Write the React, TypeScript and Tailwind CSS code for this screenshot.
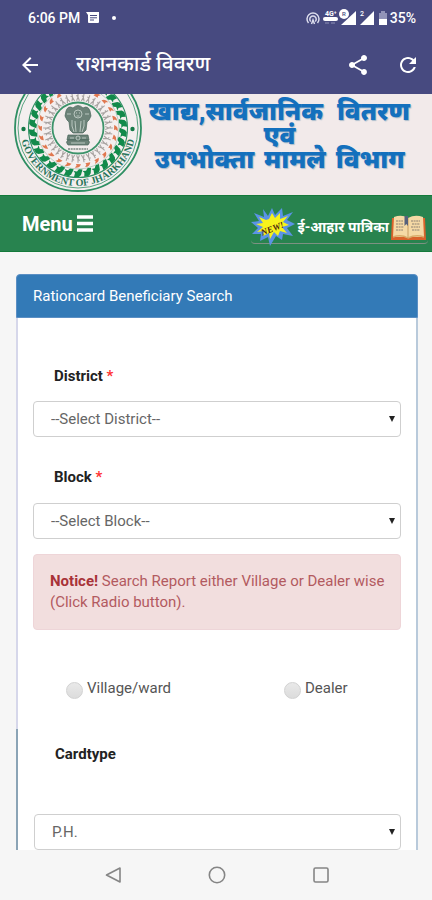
import React from "react";

const ring = (count: number) => Array.from({ length: count }, (_, i) => (i * 360) / count);

function Seal() {
  return (
    <svg viewBox="-65 -34 130 101" className="h-[101px] w-[130px] shrink-0" role="img" aria-label="Government of Jharkhand seal">
      <circle r="63" fill="#f4efef" stroke="#2f8f63" strokeWidth="1.8" />
      <circle r="60" fill="none" stroke="#5aa582" strokeWidth="1" />
      <circle r="49.5" fill="none" stroke="#2f8f63" strokeWidth="1.1" />
      {ring(30).map((a) => (
        <g key={a} transform={`rotate(${a}) translate(0 -45)`}>
          <path d="M-4.5 3.5 L-3 -2 L-1 -4 L4 -4 L3 0 L4.500 2 L1 1.500 L-1 4 Z" fill="#128a4b" />
        </g>
      ))}
      <circle r="41" fill="none" stroke="#a9c4b5" strokeWidth="0.8" />
      {ring(24).map((a) => (
        <g key={a} transform={`rotate(${a}) translate(0 -38)`}>
          <path d="M-3 1.8 Q-1.500 -2.400 3.200 -1.600 L1.400 0.300 L2 2 Z" fill="#e07850" />
        </g>
      ))}
      {ring(36).map((a) => (
        <g key={a} transform={`rotate(${a}) translate(0 -31)`} stroke="#a8a3a1" strokeWidth="1.100" fill="none">
          <path d="M0 -3.800 V0 L-1.400 3.800 M0 0 L1.400 3.800 M-1.800 -1.600 L0 -0.600" />
        </g>
      ))}
      <circle r="25.5" fill="#f3eded" stroke="#3c936a" strokeWidth="1.8" />
      <circle cx="-54.5" cy="1" r="2.2" fill="#157a47" />
      <circle cx="54.5" cy="1" r="2.2" fill="#157a47" />
      <g fill="#6c8278" stroke="#48665a" strokeWidth="0.7">
        <path d="M-5 -20 Q-10 -23 -12 -17 L-13 -12 L-11 -8 L-9 -6 L-8 2 L-5 5 L5 5 L8 2 L9 -6 L11 -8 L13 -12 L12 -17 Q10 -23 5 -20 Q0 -25 -5 -20 Z" />
        <path d="M-10 7 H10 L11 12 H-11 Z" />
        <path d="M-10 12 H10 Q13 14 10 17 H-10 Q-13 14 -10 12 Z" />
      </g>
      <g fill="none" stroke="#cdd8d2" strokeWidth="0.8">
        <circle cy="-14" r="4" />
        <path d="M-2 -15 H-1 M1 -15 H2 M-1.5 -12 H1.5 M-11 -14 H-7 M7 -14 H11 M-6 -8 Q-7 -2 -4 4 M6 -8 Q7 -2 4 4 M-3 -7 L-2 4 M3 -7 L2 4" />
        <circle cy="10" r="2" />
        <path d="M-8 10 H-4 M4 10 H8 M-7 15 H7" />
      </g>
      <path d="M-10 21 H10" stroke="#7d8883" strokeWidth="1.3" strokeDasharray="2 0.7" />
      <path id="seal-arc" d="M-57 8 A57.5 57.5 0 0 0 57 8" fill="none" />
      <text fontFamily="Liberation Serif, serif" fontWeight="700" fontSize="10" fill="#28755a">
        <textPath href="#seal-arc" startOffset="50%" textAnchor="middle">GOVERNMENT OF JHARKHAND</textPath>
      </text>
    </svg>
  );
}

function StatusIcons() {
  return (
    <svg viewBox="0 0 70 20" className="h-5 w-[70px]" fill="#fff" aria-hidden="true">
      <g fill="none" stroke="#dcdded" strokeWidth="1.500">
        <path d="M2.500 15 A6 6 0 1 1 11.500 15" />
        <path d="M4.800 13.500 A3.200 3.200 0 1 1 9.200 13.500" />
        <path d="M5.500 16 L7 12 L8.500 16" />
      </g>
      <text x="19" y="8" fontSize="7" fontWeight="700" fontFamily="Roboto, sans-serif">4G⁺</text>
      <rect x="17" y="9" width="15" height="4" rx="2" />
      <path d="M19 15 H23 M25 15 H29" stroke="#8f91b7" />
      <path d="M50 3 V17 H35 Z" />
      <circle cx="38" cy="6" r="5" />
      <text x="36" y="8" fontSize="6" fill="#474a80" fontFamily="Roboto, sans-serif">R</text>
      <path d="M68 3 V17 H54 Z" />
      <text x="54" y="8" fontSize="7" fontFamily="Roboto, sans-serif">2</text>
    </svg>
  );
}

function Battery() {
  return (
    <svg viewBox="0 0 10 16" className="h-4 w-2.5" aria-hidden="true">
      <path d="M3 1 H7 V3 H9 V15 H1 V3 H3 Z" fill="#9294b9" />
      <path d="M1 9 H9 V15 H1 Z" fill="#fff" />
    </svg>
  );
}

function NewBurst() {
  return (
    <svg viewBox="0 0 44 40" className="h-10 w-11" role="img" aria-label="New">
      <path fill="#5b93e6" d="M17 9 L21 1 L24 8 L31 1 L32 9 L42 5 L36 13 L44 17 L36 21 L42 29 L32 27 L31 33 L25 29 L19 39 L17 30 L9 34 L10 27 L1 27 L7 21 L0 15 L8 14 L3 6 L13 10 L12 2 Z" />
      <path fill="#f8f31c" d="M18 12 L21 6 L24 11 L29 6 L29 12 L37 9 L32 15 L38 18 L31 20 L36 26 L29 24 L27 29 L23 25 L19 32 L18 26 L12 29 L13 24 L6 25 L12 20 L5 17 L12 16 L8 10 L15 13 Z" />
      <text x="9" y="25" transform="rotate(-22 20 21)" fontFamily="Liberation Serif, serif" fontWeight="700" fontStyle="italic" fontSize="9" fill="#4b2412">NEW!</text>
    </svg>
  );
}

function Book() {
  return (
    <svg viewBox="0 0 35 27" className="h-[27px] w-[35px]" aria-hidden="true">
      <path d="M1 4 L34 4 L35 26 H0 Z" fill="#d9622b" />
      <path d="M3 3 Q11 0 17 4 Q24 0 32 3 L33 23 H2 Z" fill="#f5d9a5" />
      <path d="M2 23 Q10 20 17 24 Q25 20 33 23" fill="none" stroke="#d8ab6a" strokeWidth="1.4" />
      <path d="M17 4 V23" stroke="#c79d62" strokeWidth="1" />
      <path d="M13.500 2 H17 V12 L15.300 10 L13.500 12 Z" fill="#56617c" />
      <path d="M5 7 H12 M5 10 H12 M5 13 H13 M5 16 H12 M20 7 H29 M21 10 H29 M20 13 H29 M21 16 H29" stroke="#c0ac8b" strokeWidth="1.8" strokeDasharray="2 0.6" />
    </svg>
  );
}

type FieldSelectProps = { id: string; options: string[] };

function FieldSelect({ id, options }: FieldSelectProps) {
  return (
    <div className="relative">
      <select
        id={id}
        className="block h-9 w-full appearance-none rounded border border-[#cfcfcf] bg-white pl-[17px] pr-6 text-[15px] leading-5 text-[#666]"
      >
        {options.map((option) => (
          <option key={option}>{option}</option>
        ))}
      </select>
      <svg viewBox="0 0 6 6" className="pointer-events-none absolute right-1.5 top-[15px] size-1.5" aria-hidden="true">
        <path d="M0 0 H6 L3 6 Z" fill="#222" />
      </svg>
    </div>
  );
}

function RadioOption({ label, value }: { label: string; value: string }) {
  return (
    <label className="flex items-center gap-1">
      <input
        type="radio"
        name="wise"
        value={value}
        className="mt-1 size-[17px] appearance-none rounded-full border border-[#d2d2d2] bg-linear-to-b from-[#e9e9e9] to-[#dcdcdc] checked:border-[5px] checked:border-[#337ab7]"
      />
      <span>{label}</span>
    </label>
  );
}

export default function App() {
  return (
    <div className="flex h-screen flex-col bg-[#f6f6f6] font-[Roboto,'Noto_Sans',sans-serif] text-[15px] text-[#555]">
      <header className="shrink-0 bg-[#474a80] text-white">
        <div className="flex h-9 items-center justify-between pl-7 pr-4 text-sm font-medium">
          <div className="flex items-center gap-1.5">
            <span>6:06 PM</span>
            <svg viewBox="0 0 14 12" className="h-3 w-3.5" aria-hidden="true">
              <path d="M0 0 H13 V10 Q13 11 12 11 H3 Q2 11 2 10 V3 Z" fill="#fff" />
              <path d="M4 3.500 H11 M4 5.800 H11 M4 8 H8" stroke="#474a80" strokeWidth="1" />
            </svg>
            <span className="ml-1.5 size-1 rounded-full bg-white" />
          </div>
          <div className="flex items-center gap-0.5">
            <StatusIcons />
            <Battery />
            <span>35%</span>
          </div>
        </div>
        <div className="flex h-[58px] items-center pl-[18px] pr-3">
          <button type="button" aria-label="Back" className="size-6">
            <svg viewBox="0 0 24 24" fill="#fff">
              <path d="M20 11H7.830l5.590-5.590L12 4l-8 8 8 8 1.410-1.410L7.830 13H20v-2z" />
            </svg>
          </button>
          <h1 className="ml-[34px] flex-1 text-[21px] font-medium">राशनकार्ड विवरण</h1>
          <button type="button" aria-label="Share" className="size-6">
            <svg viewBox="0 0 24 24" fill="#fff">
              <path d="M18 16.080c-.760 0-1.440.300-1.960.770L8.910 12.700c.050-.230.090-.460.090-.700s-.040-.470-.090-.700l7.050-4.110c.540.500 1.250.810 2.040.810 1.660 0 3-1.340 3-3s-1.340-3-3-3-3 1.340-3 3c0 .240.040.470.090.700L8.040 9.810C7.500 9.310 6.790 9 6 9c-1.660 0-3 1.340-3 3s1.340 3 3 3c.790 0 1.500-.310 2.040-.810l7.120 4.160c-.050.210-.080.430-.080.650 0 1.610 1.310 2.920 2.920 2.920s2.920-1.310 2.920-2.920-1.310-2.920-2.920-2.920z" />
            </svg>
          </button>
          <button type="button" aria-label="Refresh" className="ml-[26px] size-6">
            <svg viewBox="0 0 24 24" fill="#fff">
              <path d="M17.650 6.350C16.200 4.900 14.210 4 12 4c-4.420 0-7.990 3.580-7.990 8s3.570 8 7.990 8c3.730 0 6.840-2.550 7.730-6h-2.080c-.820 2.330-3.040 4-5.650 4-3.310 0-6-2.690-6-6s2.690-6 6-6c1.660 0 3.140.690 4.220 1.780L13 11h7V4l-2.350 2.350z" />
            </svg>
          </button>
        </div>
      </header>

      <main className="min-h-0 flex-1 overflow-hidden">
        <div className="flex h-[101px] overflow-hidden bg-[#f2eaea] pl-[13px]">
          <Seal />
          <div className="flex flex-1 flex-col items-center pr-4 pt-1.5 text-[25px] font-black leading-6 text-[#1470bd] [text-shadow:1px_1px_1px_#a9bccb]">
            <p className="flex gap-3.5 whitespace-nowrap">
              <span>खाद्य,सार्वजानिक</span>
              <span>वितरण</span>
            </p>
            <p>एवं</p>
            <p className="flex gap-2.5 whitespace-nowrap">
              <span>उपभोक्ता</span>
              <span>मामले</span>
              <span>विभाग</span>
            </p>
          </div>
        </div>

        <div className="flex h-[57px] items-center justify-between border-y border-[#147a3b] bg-[#28834f] pl-[22px] pr-1 text-white">
          <button type="button" className="flex items-center gap-1 text-xl font-bold">
            Menu
            <svg viewBox="0 0 16 17" className="h-[17px] w-4" aria-hidden="true">
              <path d="M0 2 H16 M0 8.500 H16 M0 15 H16" stroke="#fff" strokeWidth="3.400" />
            </svg>
          </button>
          <a href="#patrika" className="mt-2 flex h-8 items-center rounded-b border-b border-[#7d9182] pr-0.5 text-[14px] font-bold">
            <NewBurst />
            <span className="mx-0.5 whitespace-nowrap">ई-आहार पात्रिका</span>
            <Book />
          </a>
        </div>

        <form className="ml-4 mr-3.5 mt-[22px]">
          <h2 className="flex h-11 items-center rounded-t-sm border border-[#5b8fc4] bg-[#337ab7] px-4 text-[15px] text-white">
            Rationcard Beneficiary Search
          </h2>
          <div className="h-[411px] border-l-2 border-r-2 border-l-[#d6d7ea] border-r-[#b9cadb] bg-white px-[15px] pt-12">
            <label htmlFor="district" className="block pl-[21px] text-[15px] font-bold leading-5 text-[#222]">
              District <span className="text-[#f33]">*</span>
            </label>
            <div className="mt-[15px]">
              <FieldSelect id="district" options={["--Select District--"]} />
            </div>
            <label htmlFor="block" className="mt-[30px] block pl-[21px] text-[15px] font-bold leading-5 text-[#222]">
              Block <span className="text-[#f33]">*</span>
            </label>
            <div className="mt-4">
              <FieldSelect id="block" options={["--Select Block--"]} />
            </div>
            <p className="mt-[15px] h-[76px] rounded border border-[#eed5d8] bg-[#f2dede] py-4 pl-4 pr-3 leading-[21px] text-[#b25a60]">
              <strong className="text-[#a83238]">Notice!</strong> Search Report either Village or Dealer wise (Click Radio button).
            </p>
            <div className="mt-[47px] grid grid-cols-[218px_1fr] pl-[33px]">
              <RadioOption label="Village/ward" value="village" />
              <RadioOption label="Dealer" value="dealer" />
            </div>
          </div>
          <div className="border-l-2 border-r-2 border-l-[#8ba4b6] border-r-[#b9cadb] bg-white pb-10 pl-4 pr-[15px] pt-[15px]">
            <label htmlFor="cardtype" className="block pl-[21px] text-[15px] font-bold leading-5 text-[#222]">
              Cardtype
            </label>
            <div className="mt-[50px]">
              <FieldSelect id="cardtype" options={["P.H."]} />
            </div>
          </div>
        </form>
      </main>

      <nav className="flex h-[50px] shrink-0 items-center justify-center gap-20 pl-0.5">
        <button type="button" aria-label="Back" className="size-6">
          <svg viewBox="0 0 24 24" fill="none" stroke="#858585" strokeWidth="1.600" strokeLinejoin="round">
            <path d="M19 5 V19 L5.500 12 Z" />
          </svg>
        </button>
        <button type="button" aria-label="Home" className="size-6">
          <svg viewBox="0 0 24 24" fill="none" stroke="#858585" strokeWidth="1.600">
            <circle cx="12" cy="12" r="7.700" />
          </svg>
        </button>
        <button type="button" aria-label="Recent apps" className="size-6">
          <svg viewBox="0 0 24 24" fill="none" stroke="#858585" strokeWidth="1.600">
            <rect x="5" y="5" width="14" height="14" rx="1.500" />
          </svg>
        </button>
      </nav>
    </div>
  );
}
